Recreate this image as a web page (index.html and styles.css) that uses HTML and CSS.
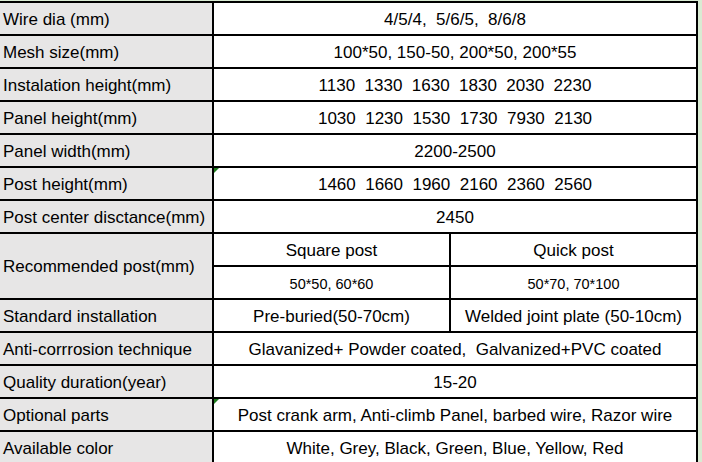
FILE: index.html
```html
<!DOCTYPE html>
<html>
<head>
<meta charset="utf-8">
<link rel="stylesheet" href="styles.css">
</head>
<body>
<div class="sheet">
  <div class="grid">
    <div class="cell label">Wire dia (mm)</div>
    <div class="cell value span2">4/5/4,&nbsp; 5/6/5,&nbsp; 8/6/8</div>

    <div class="cell label">Mesh size(mm)</div>
    <div class="cell value span2">100*50, 150-50, 200*50, 200*55</div>

    <div class="cell label">Instalation height(mm)</div>
    <div class="cell value span2">1130&nbsp; 1330&nbsp; 1630&nbsp; 1830&nbsp; 2030&nbsp; 2230</div>

    <div class="cell label">Panel height(mm)</div>
    <div class="cell value span2">1030&nbsp; 1230&nbsp; 1530&nbsp; 1730&nbsp; 7930&nbsp; 2130</div>

    <div class="cell label">Panel width(mm)</div>
    <div class="cell value span2">2200-2500</div>

    <div class="cell label">Post height(mm)</div>
    <div class="cell value span2 flag">1460&nbsp; 1660&nbsp; 1960&nbsp; 2160&nbsp; 2360&nbsp; 2560</div>

    <div class="cell label">Post center disctance(mm)</div>
    <div class="cell value span2">2450</div>

    <div class="cell label tall">Recommended post(mm)</div>
    <div class="cell value">Square post</div>
    <div class="cell value">Quick post</div>
    <div class="cell value small">50*50, 60*60</div>
    <div class="cell value small">50*70, 70*100</div>

    <div class="cell label">Standard installation</div>
    <div class="cell value">Pre-buried(50-70cm)</div>
    <div class="cell value">Welded joint plate (50-10cm)</div>

    <div class="cell label">Anti-corrrosion technique</div>
    <div class="cell value span2">Glavanized+ Powder coated,&nbsp; Galvanized+PVC coated</div>

    <div class="cell label">Quality duration(year)</div>
    <div class="cell value span2">15-20</div>

    <div class="cell label">Optional parts</div>
    <div class="cell value span2 flag">Post crank arm, Anti-climb Panel, barbed wire, Razor wire</div>

    <div class="cell label">Available color</div>
    <div class="cell value span2">White, Grey, Black, Green, Blue, Yellow, Red</div>
  </div>
</div>
</body>
</html>
```

FILE: styles.css
```css
html, body {
  margin: 0;
  padding: 0;
}

body {
  background: #d9ebd3;
  font-family: "Liberation Sans", Arial, sans-serif;
  color: #000;
  width: 702px;
  height: 462px;
  overflow: hidden;
}

.sheet {
  padding-top: 1px;
}

.grid {
  display: grid;
  grid-template-columns: 214px 237px 247px;
  grid-auto-rows: 33px;
  width: 698px;
  border-top: 2px solid #000;
  box-sizing: border-box;
}

.cell {
  box-sizing: border-box;
  border-right: 2px solid #000;
  border-bottom: 2px solid #000;
  padding-top: 2px;
  display: flex;
  align-items: center;
  font-size: 17px;
  white-space: nowrap;
  position: relative;
}

.label {
  background: #e7e6e6;
  padding-left: 3px;
}

.value {
  background: #fff;
  justify-content: center;
}

.span2 {
  grid-column: span 2;
}

.tall {
  grid-row: span 2;
}

.small {
  font-size: 14.5px;
}

.flag::before {
  content: "";
  position: absolute;
  left: 0;
  top: 0;
  width: 0;
  height: 0;
  border-top: 5px solid #1e7b1e;
  border-right: 5px solid transparent;
}
```
